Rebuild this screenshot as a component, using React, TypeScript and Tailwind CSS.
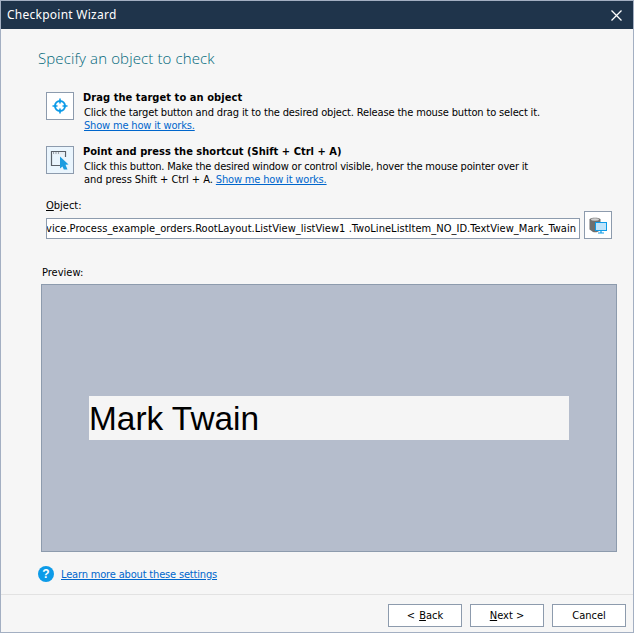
const font = "[font-family:'DejaVu_Sans_Condensed','DejaVu_Sans',sans-serif]";

function TargetIcon() {
  return (
    <svg width="16" height="16" viewBox="0 0 16 16" fill="none" stroke="#0d9be8">
      <circle cx="8" cy="8" r="5" strokeWidth="2" />
      <path d="M8 0.5V5.5M8 10.5V15.5M0.5 8H5.5M10.5 8H15.5" strokeWidth="1.6" />
    </svg>
  );
}

function WindowIcon() {
  return (
    <svg width="20" height="20" viewBox="0 0 20 20" fill="none">
      <path d="M11 15.5H1.5V1.5H15.5V7" stroke="#5a6068" strokeWidth="1.2" />
      <path d="M2 2H15V4.5H2Z" fill="#e6edf3" />
      <path d="M3 3H4M5.5 3H6.5M8 3H9" stroke="#5a6068" strokeWidth="1" />
      <path d="M10 6.5L18.5 14.5L15.5 14.8L17.5 19.5H13.8L12.5 16.5L10 18.5Z" fill="#1b9ce0" />
    </svg>
  );
}

function ObjectIcon() {
  return (
    <svg width="18" height="18" viewBox="0 0 18 18" fill="none">
      <path d="M0.5 3.5C0.5 1 11.5 1 11.5 3.5V14C9 16.5 6 16.5 4 16L0.5 13.5Z" fill="#6f6f6f" />
      <ellipse cx="6" cy="3.5" rx="4" ry="1.2" fill="#cfcfcf" />
      <rect x="6.5" y="6.5" width="11" height="8" fill="#bfe4fb" stroke="#0d9be8" />
      <path d="M12 14.5V16.5M9 17H15" stroke="#0d9be8" strokeWidth="1.2" />
    </svg>
  );
}

function HelpIcon() {
  return (
    <div className="flex h-4 w-4 items-center justify-center rounded-full bg-[#0d9be8] text-[12px] leading-none font-bold text-white [font-family:'Liberation_Sans',sans-serif]">
      ?
    </div>
  );
}

function IconBox({ children, bg }: { children: React.ReactNode; bg: string }) {
  return (
    <div className={`flex h-[28px] w-[28px] shrink-0 items-center justify-center border border-[#8d9bad] ${bg}`}>
      {children}
    </div>
  );
}

function Link({ children }: { children: React.ReactNode }) {
  return <span className="tracking-[-0.17px] text-[#0066cc] underline">{children}</span>;
}

function Btn({ children }: { children: React.ReactNode }) {
  return (
    <div className="flex h-[23px] w-[74px] items-center justify-center border border-[#8d9bad] bg-white pt-[1px] text-[11px] text-black">
      {children}
    </div>
  );
}

export default function App() {
  return (
    <div className={`flex h-[633px] w-[634px] flex-col border border-[#a3afc2] bg-[#f6f6f6] text-[11px] text-black ${font}`}>
      <div className="flex h-[28px] shrink-0 items-center justify-between bg-[#1f344b] pr-[11px] pl-[6px] text-white">
        <span className="pb-[1px] text-[12px] tracking-[0.25px] [font-family:'Noto_Sans',sans-serif]">Checkpoint Wizard</span>
        <svg width="11" height="11" viewBox="0 0 11 11" stroke="#fff" strokeWidth="1.3">
          <path d="M0.5 0.5L10.5 10.5M10.5 0.5L0.5 10.5" />
        </svg>
      </div>

      <div className="flex min-h-0 flex-1 flex-col pl-[37px]">
        <h1 className="mt-[18px] h-[22px] text-[15px] leading-[22px] font-light tracking-[0.12px] text-[#00677a] [font-family:'Open_Sans','Noto_Sans',sans-serif]">
          Specify an object to check
        </h1>

        <div className="mt-[23px] flex pl-[8px]">
          <IconBox bg="bg-white"><TargetIcon /></IconBox>
          <div className="ml-[9px] -mt-[1px] leading-[13px]">
            <div className="font-bold tracking-[0.07px]">Drag the target to an object</div>
            <div className="mt-[2px] ml-[1px] tracking-[-0.145px]">Click the target button and drag it to the desired object. Release the mouse button to select it.</div>
            <div className="ml-[1px]"><Link>Show me how it works.</Link></div>
          </div>
        </div>

        <div className="mt-[14px] flex pl-[8px]">
          <IconBox bg="bg-[#eaf5fd]"><WindowIcon /></IconBox>
          <div className="ml-[9px] -mt-[1px] leading-[13px]">
            <div className="font-bold tracking-[0.03px]">Point and press the shortcut (Shift + Ctrl + A)</div>
            <div className="mt-[2px] ml-[1px] tracking-[-0.19px]">Click this button. Make the desired window or control visible, hover the mouse pointer over it</div>
            <div className="ml-[1px] tracking-[-0.06px]">and press Shift + Ctrl + A. <Link>Show me how it works.</Link></div>
          </div>
        </div>

        <div className="mt-[13px] flex items-end pl-[8px]">
          <div className="w-[534px]">
            <div className="h-[13px] leading-[13px]"><span className="underline">O</span>bject:</div>
            <div className="mt-[6px] flex h-[21px] items-center justify-end overflow-hidden border border-[#8d9bad] bg-white pt-[1px] pr-[3px] tracking-[0.04px] whitespace-nowrap">
              Service.Process_example_orders.RootLayout.ListView_listView1 .TwoLineListItem_NO_ID.TextView_Mark_Twain
            </div>
          </div>
          <div className="ml-[4px] flex">
            <IconBox bg="bg-white"><ObjectIcon /></IconBox>
          </div>
        </div>

        <div className="mt-[26px] h-[13px] pt-[1px] pl-[4px] leading-[13px]">Preview:</div>
        <div className="mt-[6px] ml-[3px] flex h-[268px] w-[576px] shrink-0 flex-col justify-center border border-[#8d9bad] bg-[#b5bdcc] pl-[47px]">
          <div className="flex h-[44px] w-[480px] items-center bg-[#f5f5f5] pt-[3px] text-[33.4px] text-black [font-family:'Liberation_Sans',sans-serif]">
            Mark Twain
          </div>
        </div>

        <div className="mt-[14px] flex h-4 items-center">
          <HelpIcon />
          <span className="ml-[7px] pt-[2px]"><Link>Learn more about these settings</Link></span>
        </div>
      </div>

      <div className="flex h-[38px] shrink-0 items-start justify-end gap-2 border-t border-[#e2e2e2] pt-[9px] pr-[7px]">
        <Btn>&lt; <span className="ml-1 underline">B</span>ack</Btn>
        <Btn><span className="underline">N</span>ext &gt;</Btn>
        <Btn>Cancel</Btn>
      </div>
    </div>
  );
}
